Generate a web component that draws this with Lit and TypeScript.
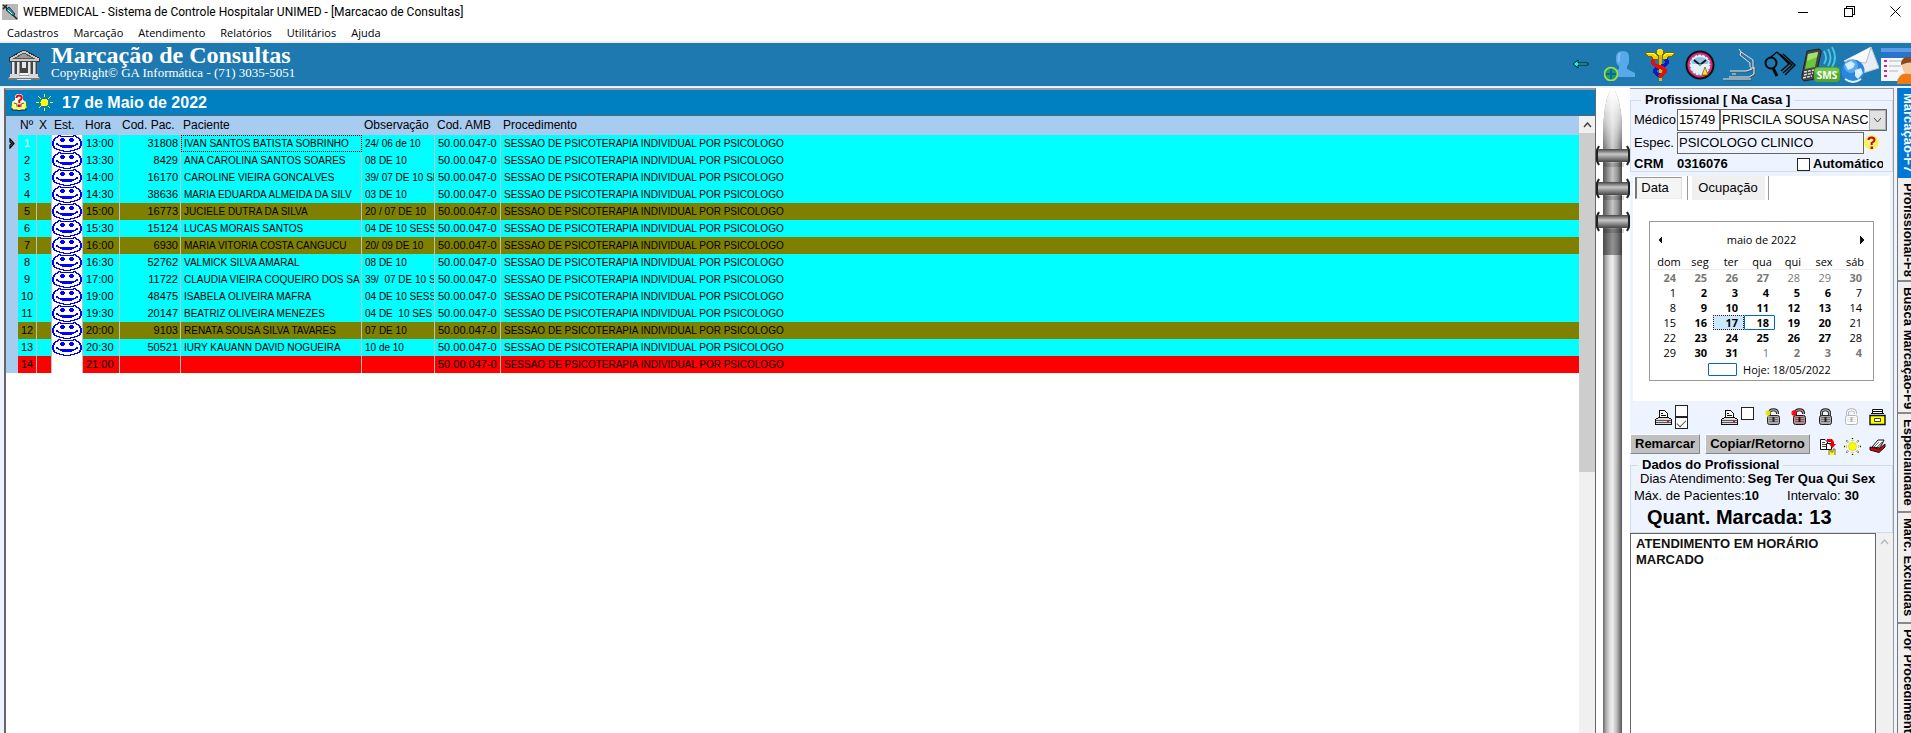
import { LitElement, html, css, svg } from "lit";
import { customElement, state } from "lit/decorators.js";
import { classMap } from "lit/directives/class-map.js";

type Tone = "free" | "seen" | "open";
interface Slot {
  hour: string;
  code: string;
  patient: string;
  note: string;
  tone: Tone;
}

const slot = (hour: string, code: string, patient: string, note: string, tone: Tone = "free"): Slot => ({
  hour, code, patient, note, tone,
});

const SLOTS: Slot[] = [
  slot("13:00", "31808", "IVAN SANTOS BATISTA SOBRINHO", "24/ 06 de 10"),
  slot("13:30", "8429", "ANA CAROLINA SANTOS SOARES", "08 DE 10"),
  slot("14:00", "16170", "CAROLINE VIEIRA GONCALVES", "39/ 07 DE 10 SE"),
  slot("14:30", "38636", "MARIA EDUARDA ALMEIDA DA SILV", "03 DE 10"),
  slot("15:00", "16773", "JUCIELE DUTRA DA SILVA", "20 / 07 DE 10", "seen"),
  slot("15:30", "15124", "LUCAS MORAIS SANTOS", "04 DE 10 SESS"),
  slot("16:00", "6930", "MARIA VITORIA COSTA CANGUCU", "20/ 09 DE 10", "seen"),
  slot("16:30", "52762", "VALMICK SILVA AMARAL", "08 DE 10"),
  slot("17:00", "11722", "CLAUDIA VIEIRA COQUEIRO DOS SA", "39/  07 DE 10 S"),
  slot("19:00", "48475", "ISABELA OLIVEIRA MAFRA", "04 DE 10 SESS"),
  slot("19:30", "20147", "BEATRIZ OLIVEIRA MENEZES", "04 DE  10 SES"),
  slot("20:00", "9103", "RENATA SOUSA SILVA TAVARES", "07 DE 10", "seen"),
  slot("20:30", "50521", "IURY KAUANN DAVID NOGUEIRA", "10 de 10"),
  slot("21:00", "", "", "", "open"),
];

const COLUMNS = [
  ["c-mark", ""], ["c-num", "Nº"], ["c-x", "X"], ["c-est", "Est."], ["c-hour", "Hora"], ["c-code", "Cod. Pac."],
  ["c-pat", "Paciente"], ["c-obs", "Observação"], ["c-amb", "Cod. AMB"], ["c-proc", "Procedimento"],
];

const WEEKDAYS = ["dom", "seg", "ter", "qua", "qui", "sex", "sáb"];
// b = bold (has bookings), g = outside the month
const DAYS: string[][] = [
  ["24bg", "25bg", "26bg", "27bg", "28g", "29g", "30bg"],
  ["1", "2b", "3b", "4b", "5b", "6b", "7"],
  ["8", "9b", "10b", "11b", "12b", "13b", "14"],
  ["15", "16b", "17b", "18b", "19b", "20b", "21"],
  ["22", "23b", "24b", "25b", "26b", "27b", "28"],
  ["29", "30b", "31b", "1g", "2bg", "3bg", "4bg"],
];

const SIDE_TABS = [
  ["Marcação-F7", "t1"], ["Profissional-F8", "t2"], ["Busca Marcação-F9", "t3"],
  ["Especialidade", "t4"], ["Marc. Excluidas", "t5"], ["Por Procedimento", "t6"],
];

const icon = (w: number, h: number, body: unknown, crisp = true) => html`<svg
  width=${w} height=${h} viewBox="0 0 ${w} ${h}" aria-hidden="true"
  shape-rendering=${crisp ? "crispEdges" : "auto"}>${body}</svg>`;

const smiley = icon(30, 17, svg`
  <rect width="30" height="17" fill="#fff"/>
  <path d="M6 0H9V1H6ZM21 0H24V1H21ZM8 1H22V2H8ZM5 1H7V2H5ZM23 1H25V2H23ZM3 2H6V3H3ZM24 2H27V3H24ZM2 3H4V4H2ZM26 3H28V4H26ZM1 4H3V6H1ZM27 4H29V6H27ZM0 6H2V11H0ZM28 6H30V11H28ZM1 11H3V13H1ZM27 11H29V13H27ZM2 13H5V14H2ZM25 13H28V14H25ZM4 14H8V15H4ZM22 14H26V15H22ZM7 15H12V16H7ZM18 15H23V16H18ZM11 16H19V17H11Z" fill="#00f"/>
  <path d="M9 3H12V4H13V6H12V7H9V6H8V4H9ZM18 3H21V4H22V6H21V7H18V6H17V4H18Z" fill="#00f"/>
  <path d="M4 8H6V9H7V10H23V9H24V8H26V10H24V11H22V12H20V13H10V12H8V11H6V10H4Z" fill="#00f"/>`);

const sun = icon(17, 17, svg`
  <path d="M8.500 0V17M0 8.500H17M2.500 2.500L14.500 14.500M14.500 2.500L2.500 14.500" stroke="#ff0" stroke-width="1.200"/>
  <circle cx="8.500" cy="8.500" r="5.500" fill="#0080c0"/>
  <circle cx="8.500" cy="8.500" r="4" fill="#ff0"/>`);

const sunDark = icon(17, 17, svg`
  <path d="M8.500 0V17M0 8.500H17M2.500 2.500L14.500 14.500M14.500 2.500L2.500 14.500" stroke="#222" stroke-width="1.400" stroke-dasharray="1 1"/>
  <path d="M8.500 1V16M1 8.500H16M3 3L14 14M14 3L3 14" stroke="#ee0" stroke-width="1"/>
  <circle cx="8.500" cy="8.500" r="5.500" fill="#eef4ff"/>
  <circle cx="8.500" cy="8.500" r="4" fill="#ff0" stroke="#aa0" stroke-width=".4"/>`, false);

const bookHelp = icon(16, 17, svg`
  <path d="M4 2L6 0H10L12 2V6L15 8V15L14 16H2L1 15V8L4 6Z" fill="#fff"/>
  <path d="M2 8L1 14H6L8 15L10 14H15L14 8" fill="#fff8b0" stroke="#ff0" stroke-width="1.200"/>
  <path d="M1 14V16H6L8 17L10 16H15V14" fill="none" stroke="#222"/>
  <path d="M3 9L6 10V13M13 9L10 10V13" fill="none" stroke="#333" stroke-width=".8"/>
  <path d="M5.500 4Q5.500 1.500 8 1.500Q10.800 1.500 10.800 4Q10.800 5.500 8.300 6.500V9" fill="none" stroke="#e00" stroke-width="2"/>
  <path d="M7 10.500H9.500V13H7Z" fill="#e00"/>`, false);

const bank = icon(32, 32, svg`
  <path d="M16 1L31 9V12H1V9Z" fill="#c9c9c9" stroke="#333" stroke-width="1"/>
  <path d="M16 4L25 9H7Z" fill="#999" stroke="#555" stroke-width="1"/>
  <path d="M3 12H29V26H3Z" fill="#444"/>
  <path d="M4 13H7V26H4ZM9 13H12V26H9ZM14 13H18V19H14ZM20 13H23V26H20ZM25 13H28V26H25Z" fill="#e6e6e6"/>
  <path d="M6 13V26M11 13V26M22 13V26M27 13V26" stroke="#999" stroke-width="1"/>
  <path d="M2 25H12V28H2ZM20 25H30V28H20Z" fill="#d8d8d8"/>
  <path d="M12 24H20V28H23V31H9V28H12Z" fill="#f2f2f2"/>
  <path d="M11 26H21M10 28H22" stroke="#999"/>
  <path d="M0 28H32V31H0Z" fill="#777"/><path d="M1 28H31M9 30H23" stroke="#ddd"/>`);

const syringe = icon(16, 16, svg`
  <rect width="16" height="16" fill="#b8b8b8"/>
  <path d="M1 1L5 4M1 5L5 1M4 4L11 11M11 11L15 15" stroke="#222" stroke-width="1.500"/>
  <path d="M4 6L7 3L13 10L11 12Z" fill="#1b8fa0" stroke="#123" stroke-width=".8"/>
  <path d="M6 6L10 10" stroke="#fff"/>`, false);

const TOOLS: [string, unknown][] = [
  ["Voltar", icon(17, 11, svg`<path d="M1 5L6 1V4H16V6H6V9Z" fill="#0ff" stroke="#111" stroke-width="1"/>`, false)],
  ["Novo paciente", icon(32, 32, svg`
    <path d="M12 8Q12 2 19 2Q25 2 25 8V13Q25 15 23 17V20L31 24V28H8V23L15 20V17Q12 15 12 11Z" fill="#57a9ea"/>
    <path d="M16 4Q14 8 15 13" stroke="#7cc0f4" stroke-width="2" fill="none"/>
    <circle cx="7" cy="25" r="6.500" fill="#15a06a" stroke="#a8e23a" stroke-width="1.600"/>
    <path d="M7 20V30M2 25H12" stroke="#1560a8" stroke-width="2"/>`, false)],
  ["Convênios", icon(32, 32, svg`
    <path d="M0 3H7Q12 3 14 7H18Q20 3 25 3H32L28 7H25L23 10H18V7H14V10H9L7 7H4Z" fill="#e8d400" stroke="#776600" stroke-width="1"/>
    <path d="M3 4H9L12 7M29 4H23L20 7" stroke="#ff6" fill="none"/>
    <path d="M16 4V32" stroke="#d9b800" stroke-width="3"/>
    <circle cx="16" cy="3" r="3" fill="#ffe000"/>
    <path d="M22 10Q25 15 19 17L13 19Q9 22 13 25L18 28" fill="none" stroke="#1018c0" stroke-width="4"/>
    <path d="M10 10Q7 15 13 17L19 19Q23 22 19 25L15 28" fill="none" stroke="#e01010" stroke-width="4"/>`)],
  ["Agenda", icon(30, 30, svg`
    <circle cx="15" cy="15" r="13" fill="#fff" stroke="#111" stroke-width="3"/>
    <circle cx="15" cy="15" r="11.500" fill="#dff0fb" stroke="#e0287a" stroke-width="2"/>
    <path d="M6 12Q15 2 24 12L22 14H8Z" fill="#8cc4e8"/>
    <circle cx="15" cy="15" r="10" fill="none" stroke="#1b3e80" stroke-width="1" stroke-dasharray="1 3"/>
    <path d="M9 10L15 15L21 10" fill="none" stroke="#111" stroke-width="1.800"/>
    <path d="M7 15H23M9 18H14M11 21H15" stroke="#e8f6ff"/>
    <path d="M17 25L20 17L23 25Z" fill="#ffe340" stroke="#776000" stroke-width=".8"/>`, false)],
  ["Exames", icon(34, 34, svg`
    <path d="M17 2L19 5L31 13V20L32 22V27L27 30H7M19 5L18 8L28 16V20M28 21H33M8 24H24L30 22M10 27H14M1 32H29" fill="none" stroke="#555" stroke-width="1"/>
    <path d="M16 1L18 4L30 12V19L31 21V26L26 29H6M18 4L17 7L27 15V19M27 20H32M7 23H23L29 21M9 26H13M0 31H28" fill="none" stroke="#e8e8e8" stroke-width="1"/>`, false)],
  ["Localizar", icon(32, 28, svg`
    <path d="M13 1L25 13L17 20M13 1L7 6M16 3L28 14L19 22M19 3L31 14L21 24" fill="none" stroke="#080808" stroke-width="1.500"/>
    <circle cx="7" cy="12" r="5.500" fill="#1e79b0" stroke="#080808" stroke-width="2"/>
    <path d="M9 17L13 25" stroke="#080808" stroke-width="3"/>`, false)],
  ["SMS", icon(40, 38, svg`
    <path d="M7 5L19 3Q22 4 21 7L15 33L4 35Q1 33 2 29Z" fill="#444" stroke="#222"/>
    <path d="M8 8L18 6L15 21L5 23Z" fill="#6cc53a"/><path d="M8 8L18 6L17 11L7 15Z" fill="#a8e070"/>
    <path d="M4 26L14 24M4 29L13 27M3 32L12 30" stroke="#ddd" stroke-width="1.500" stroke-dasharray="3 1"/>
    <path d="M24 5Q28 12 24 18M28 3Q33 12 28 20M32 1Q38 12 32 21" fill="none" stroke="#46c4e0" stroke-width="2"/>
    <rect x="14" y="21" width="26" height="15" rx="4" fill="#4fa82b"/><rect x="15" y="22" width="24" height="6" rx="3" fill="#74c74c"/>
    <text x="27" y="33" text-anchor="middle" font-family="Open Sans, sans-serif" font-size="10" font-weight="700" fill="#fff">SMS</text>`, false)],
  ["E-mail", icon(38, 38, svg`
    <path d="M3 15L30 1L38 22L22 27Z" fill="#e9edf4" stroke="#b9c3d2"/>
    <path d="M3 15L25 17L30 1" fill="#fafbfd" stroke="#b4bfcd"/>
    <circle cx="12" cy="25" r="11.500" fill="#2a86dd"/><circle cx="10" cy="20" r="7" fill="#6db8f5" opacity=".7"/>
    <path d="M4 18L10 15L14 18L12 22L7 24ZM14 24L20 22L22 27L17 33L14 30Z" fill="#d8efff"/>
    <path d="M4 33Q12 39 20 33" stroke="#e4f3ff" stroke-width="2" fill="none"/>`, false)],
  ["Recepção", icon(38, 38, svg`
    <rect x="0" y="2" width="38" height="33" fill="#f3f6fb"/><rect x="0" y="2" width="38" height="10" fill="#2b73c8"/>
    <path d="M0 2H38V6H0Z" fill="#5b9de4"/>
    <path d="M3 15H6M3 20H6M3 25H6M3 30H6" stroke="#d8208c" stroke-width="2"/>
    <path d="M8 15H22M8 20H20M8 25H17" stroke="#ccc" stroke-width="1.500"/>
    <path d="M16 38Q16 28 26 27Q36 28 37 38Z" fill="#f07a14"/>
    <ellipse cx="27" cy="20" rx="6" ry="8" fill="#f4c9a0"/><path d="M20 19Q20 11 27 11Q34 11 34 19Q30 14 20 19Z" fill="#8a4a1c"/>`, false)],
];

const printer = icon(17, 17, svg`
  <path d="M4.500 9V1.500H9.500L12.500 4.500V9" fill="#fff" stroke="#111"/><path d="M6 4.500H8M6 6.500H11" stroke="#111"/>
  <path d="M.5 10.500L3.500 8.500H13.500L16.500 10.500V15.500H.5Z" fill="#ddd" stroke="#111"/><path d="M1 11.500H16M1 13.500H16" stroke="#555"/>
  <path d="M12 12H14V13H12Z" fill="#e00"/>`);

const lock = (body: string, line: string, open: boolean, spark = "") => {
  const shackle = open ? "M4.500 7V5Q4.500 1.800 8.500 1.800Q12.500 1.800 12.500 5V6" : "M4.500 9V5Q4.500 1.800 8.500 1.800Q12.500 1.800 12.500 5V9";
  return icon(17, 18, svg`
  <path d=${shackle} fill="none" stroke=${line} stroke-width="3"/>
  <path d=${shackle} fill="none" stroke=${body} stroke-width="1.200"/>
  <rect x="2.500" y="7.500" width="12" height="9" rx="2" fill=${body} stroke=${line}/>
  <path d="M4 9.500H13M4 11.500H13M4 13.500H13" stroke=${line} stroke-width=".4"/>
  <path d="M7.500 9H9.500V14H7.500Z" fill=${line}/>
  ${spark ? svg`<path d="M0 5H6M3 2V9M1 3L5 7M5 3L1 7" stroke=${spark} stroke-width="1.200"/>` : ""}`, false);
};

const drawer = icon(17, 18, svg`
  <path d="M3.500 6V1.500H13.500V6" fill="#fff" stroke="#111"/><path d="M3 3.500H14M2 5.500H15" stroke="#111"/>
  <path d="M1 7.500H16V16.500H1Z" fill="#ff0" stroke="#111" stroke-width="1.400"/>
  <path d="M5.500 10.500H11.500V13.500H5.500Z" fill="#fff" stroke="#111" stroke-width=".8"/>`, false);

const copyDoc = icon(17, 17, svg`
  <path d="M1.500 1.500H6L8.500 4V11.500H1.500Z" fill="#fff" stroke="#111"/><path d="M3 4.500H6M3 6.500H7M3 8.500H7" stroke="#111" stroke-width=".8"/>
  <path d="M7.500 5.500H12.500V11.500H7.500Z" fill="#fff" stroke="#111"/>
  <path d="M8 1H13L15 4V6H17L13.500 10L10 6H12V4H8Z" fill="#e00"/>
  <path d="M10 17V12H12V14H14V11H16V17" fill="#ff0" stroke="#553" stroke-width=".8"/>`, false);

const tray = icon(17, 15, svg`
  <path d="M3 8L9 1H15L11 9Z" fill="#fff" stroke="#111"/><path d="M5 8L10 3M7 9L13 3M9 9L14 3" stroke="#111" stroke-width=".6"/>
  <path d="M1 8L10 10L16 5V8L10 13.500L1 11Z" fill="#d00" stroke="#111"/>`, false);

const question = icon(15, 15, svg`
  <circle cx="7.500" cy="7.500" r="7.500" fill="#fff79a"/>
  <circle cx="7.500" cy="7.500" r="5.500" fill="none" stroke="#ffe600" stroke-width="3" stroke-dasharray="1 1"/>
  <path d="M4.500 5Q4.500 2.500 7.500 2.500Q10.500 2.500 10.500 5Q10.500 6.500 7.700 7.800V10" fill="none" stroke="#d00000" stroke-width="2"/><path d="M6.500 11.500H9V14H6.500Z" fill="#d00000"/>`, false);

const ring = (y: number) => svg`
  <rect x="8" y=${y + 14} width="20" height="4" fill="#000" opacity=".15"/>
  <path d="M3 ${y - 3}L1 ${y + 1}V${y + 12}L3 ${y + 16}M31 ${y - 3}L33 ${y + 1}V${y + 12}L31 ${y + 16}" stroke="#222" stroke-width="2" fill="none"/>
  <rect x="2" y=${y} width="30" height="13" fill="url(#band)"/>`;

const spineTop = html`<svg class="spine-top" width="34" height="167" viewBox="0 0 34 167" aria-hidden="true">
  <defs>
    <linearGradient id="rod"><stop offset="0" stop-color="#555"/><stop offset=".3" stop-color="#999"/><stop offset=".5" stop-color="#c4c4c4"/><stop offset=".75" stop-color="#999"/><stop offset="1" stop-color="#444"/></linearGradient>
    <linearGradient id="tip" x2="0" y2="1"><stop offset="0" stop-color="#fff"/><stop offset=".5" stop-color="#fff" stop-opacity=".6"/><stop offset="1" stop-color="#fff" stop-opacity="0"/></linearGradient>
    <linearGradient id="band" x2="0" y2="1"><stop offset="0" stop-color="#444"/><stop offset=".4" stop-color="#c8c8c8"/><stop offset="1" stop-color="#444"/></linearGradient>
  </defs>
  <path d="M14 3H19L22 10L25 24L26 38V167H7V38L9 20L11 10Z" fill="url(#rod)"/>
  <path d="M14 3H19L22 10L25 24L26 38V70H7V38L9 20L11 10Z" fill="url(#tip)"/>
  <rect x="7" y="140" width="19" height="27" fill="#333" opacity=".35"/>
  ${ring(61)}${ring(94)}${ring(127)}
</svg>`;

@customElement("app-root")
export class AppRoot extends LitElement {
  @state() private current = 0;

  static styles = css`
    :host { display: block; height: 100vh; overflow: hidden; font: 12px/16px "Liberation Sans", Arial, sans-serif; color: #000; background: #fff; }
    * { box-sizing: border-box; }
    svg { display: block; flex: none; }
    button { font: inherit; color: inherit; border: 0; padding: 0; margin: 0; background: none; }
    .app { display: flex; flex-direction: column; height: 100%; }

    .titlebar { flex: none; display: flex; align-items: center; height: 23px; padding-left: 2px; gap: 5px; font: 12px/16px Roboto, "Segoe UI", sans-serif; }
    .titlebar h1 { flex: 1; margin: 0; font: inherit; }
    .winbtns { display: flex; margin-right: -7px; }
    .winbtns button { width: 46px; height: 20px; display: grid; place-items: center; }
    .menu { flex: none; display: flex; gap: 15px; height: 18px; padding-left: 7px; font: 11px/20px "Open Sans", "Segoe UI", sans-serif; }

    .banner { flex: none; display: flex; align-items: center; height: 46px; border-top: 2px solid #f0f0f0; border-bottom: 1px solid #e8f0f8; background: #1e79b0; color: #fff; padding-left: 8px; gap: 11px; overflow: hidden; font-family: "Liberation Serif", "Times New Roman", serif; }
    .banner h2 { margin: 0; font-size: 24px; line-height: 22px; }
    .banner p { margin: 0; font-size: 13px; line-height: 14px; }
    .names { flex: 1; padding-bottom: 5px; }
    .tools { display: flex; margin-right: -9px; }
    .tools button { width: 40px; height: 42px; display: grid; place-items: center; }

    .body { flex: 1; min-height: 0; display: grid; grid-template-columns: minmax(0, 1fr) 34px 264px 17px; padding: 1px 0 0 4px; background: #eef4ff; }
    .agenda { display: flex; flex-direction: column; min-height: 0; background: #fff; border: 1px solid #666; border-top: 2px solid #99a; border-left-width: 2px; border-bottom: 0; }
    .daybar { flex: none; display: flex; align-items: center; height: 26px; padding-left: 5px; gap: 9px; background: #0080c0; color: #fff; border-bottom: 1px solid #567; }
    .daybar h3 { margin: 0; font-size: 16px; line-height: 22px; }
    .gridwrap { flex: 1; min-height: 0; display: grid; grid-template-columns: minmax(0, 1fr) 16px; }
    .scroll { overflow: hidden; }

    table.slots { width: 100%; table-layout: fixed; border-collapse: separate; border-spacing: 0; }
    .slots th { height: 19px; padding: 0 0 0 2px; background: #a8cbf0; font-weight: 400; font-size: 12px; line-height: 19px; text-align: left; white-space: nowrap; }
    .slots td { height: 17px; padding: 0 2px 0 3px; line-height: 17px; font-size: 11px; white-space: pre; overflow: hidden; border-right: 1px solid #c0c0c0; }
    .c-mark { width: 12px; } .c-num { width: 19px; } .c-x { width: 15px; } .c-est { width: 31px; }
    .c-hour { width: 37px; } .c-code { width: 61px; } .c-pat { width: 181px; } .c-obs { width: 73px; } .c-amb { width: 66px; }
    .slots td.c-mark { background: #a8cbf0; padding: 0 3px; border: 0; }
    .slots td.c-num { text-align: center; padding: 0; }
    .slots td.c-code { text-align: right; }
    .slots td.c-est { padding: 0; background: #fff; }
    .slots td.c-pat, .slots td.c-obs, .slots td.c-proc { font-size: 10px; }
    .slots td.c-proc { border: 0; }
    .free td { background: #0ff; } .seen td { background: #808000; } .open td { background: #f00; }
    .current td.c-num { color: #fff; }
    .current td.c-pat { outline: 1px dotted #000; outline-offset: -1px; }

    .bar { background: #f0f0f0; display: flex; flex-direction: column; min-height: 0; }
    .bar .arrow { height: 17px; display: grid; place-items: center; }
    .thumb { height: 55%; background: #cdcdcd; }

    .spine { display: flex; flex-direction: column; background: #fff; }
    .rod { flex: 1; width: 19px; margin-left: 7px; background: linear-gradient(90deg, #666, #aaa 15%, #ddd 35%, #eee 50%, #bbb 72%, #555); }

    .side { display: flex; flex-direction: column; min-height: 0; border-right: 1px solid #999; border-top: 1px solid #999; }
    fieldset { margin: 0; min-width: 0; border: 1px solid #d4dbe8; padding: 0; }
    legend { margin-left: 7px; padding: 0 4px; font-weight: 700; font-size: 13px; line-height: 14px; }
    .prof { margin-top: 4px; display: grid; gap: 2px; padding: 2px 0 0 3px; font-size: 13px; height: 79px; }
    .prof .row { display: flex; align-items: center; height: 21px; }
    .prof label { width: 43px; white-space: nowrap; }
    .prof .crm { height: 18px; font-weight: 700; }
    .prof input[type="text"], .prof select { height: 22px; border: 1px solid #666; border-radius: 0; background: #fff; font: 13px/18px "Liberation Sans", Arial, sans-serif; color: #000; padding: 0 1px; margin: 0; }
    .prof .num { width: 43px; margin-right: 1px; }
    .prof .espec { width: 187px; margin-right: 5px; background: #eef4ff !important; }
    .pick { position: relative; width: 167px; }
    .prof select { width: 100%; appearance: none; padding-right: 18px; }
    .pick svg { position: absolute; right: 1px; top: 1px; pointer-events: none; }
    .auto { display: flex; align-items: center; gap: 3px; flex: none; margin-left: auto; margin-right: 9px; overflow: hidden; }
    .prof .auto { width: 86px; }
    input[type="checkbox"] { appearance: none; flex: none; width: 13px; height: 13px; margin: 0; border: 1px solid #222; background: #fff; }
    input.tick:checked::before { content: ""; display: block; width: 8px; height: 4px; margin: 2px 0 0 1px; border: solid #555; border-width: 0 0 1px 1px; transform: rotate(-45deg); }

    .datebox { flex: none; margin: 4px 3px 0; background: #fff; height: 225px; }
    .tabs { display: flex; height: 26px; font-size: 13px; }
    .tabs button { height: 22px; }
    .tabs .on { width: 47px; margin: 1px 0 0 2px; padding-right: 8px; background: #f5f5f5; border: 1px solid #999; border-left: 2px solid #777; border-right-color: #ddd; border-bottom-color: #eee; }
    .tabs .off { width: 82px; height: 24px; margin-left: 5px; background: #f0f0f0; border: solid #999; border-width: 0 1px; box-shadow: inset 4px 0 #fff, inset -3px 0 #fff; }
    .cal { width: 225px; height: 160px; margin: 19px 0 0 16px; border: 1px solid #999; font: 11px/15px "Open Sans", "Segoe UI", sans-serif; padding: 10px 5px 0 1px; }
    .calhead { display: flex; justify-content: space-between; align-items: center; height: 15px; padding: 0 3px 0 7px; margin-bottom: 7px; }
    .cal table { border-spacing: 0; width: 100%; table-layout: fixed; }
    .cal th { padding: 0 0 0 5px; height: 16px; line-height: 15px; font-weight: 400; border-bottom: 1px solid #eee; }
    .cal td { padding: 0 5px 0 0; height: 15px; line-height: 13px; text-align: right; border: 1px solid transparent; }
    .cal .b { font-weight: 700; } .cal .g { color: #777; }
    .cal .sel { background: #cce8ff; border: 1px dotted #222; }
    .cal .today { border: 1px solid #0066cc; border-radius: 1px; }
    .hoje { display: flex; justify-content: center; gap: 6px; align-items: center; height: 18px; padding-left: 20px; }
    .hoje i { width: 29px; height: 13px; border: 1px solid #0066cc; border-radius: 1px; }

    .acts { flex: none; display: flex; align-items: center; height: 32px; padding: 0 7px 0 25px; }
    .acts .pair { display: flex; align-items: center; gap: 3px; }
    .acts .stack { display: flex; flex-direction: column; }
    .acts .stack input { height: 12px; }
    .acts .pair.two { margin: 0 11px 0 33px; }
    .acts .pair.two input { margin-bottom: 8px; }
    .locks { flex: 1; display: flex; justify-content: space-between; }
    .cmds { flex: none; display: flex; align-items: center; height: 22px; gap: 5px; padding-right: 7px; }
    .cmds .cmd { height: 20px; background: #c0c0c0; border: 1px solid; border-color: #fff #888 #888 #fff; font-weight: 700; font-size: 13px; padding: 0 2px; white-space: nowrap; }
    .cmds .cmd:nth-child(1) { width: 70px; } .cmds .cmd:nth-child(2) { width: 105px; }
    .cmds .small { display: flex; flex: 1; justify-content: space-between; padding: 5px 0 0 4px; }

    .dados { flex: none; margin-top: 3px; height: 75px; font-size: 13px; }
    .dados p { margin: 0; display: flex; height: 17px; line-height: 14px; white-space: nowrap; }
    .dados b { font-weight: 700; }
    .dados .d1 { padding-left: 9px; gap: 2px; }
    .dados .d2 { padding-left: 3px; }
    .dados .d2 .gap { margin-left: 28px; margin-right: 4px; }
    .dados .quant { padding-left: 16px; font: 700 20px/22px "Liberation Sans", Arial, sans-serif; height: 24px; }
    .obs { flex: 1; min-height: 0; display: grid; grid-template-columns: minmax(0, 1fr) 17px; }
    textarea { resize: none; border: 1px solid #666; border-bottom: 0; border-radius: 0; margin: 0; padding: 2px 5px; font: 700 13px/16px "Liberation Sans", Arial, sans-serif; color: #111; background: #fff; overflow: hidden; width: 100%; height: 100%; }

    .sidetabs { display: flex; flex-direction: column; margin-left: 3px; border-left: 1px solid #777; background: #f0f0f0; overflow: hidden; }
    .sidetabs button { flex: none; writing-mode: vertical-rl; text-align: start; font: 700 13px/20px "Liberation Sans", Arial, sans-serif; width: 20px; padding-top: 5px; border-bottom: 2px solid #888; white-space: nowrap; overflow: hidden; }
    .sidetabs button.active { background: #0078d7; color: #fff; border-bottom: 0; }
    .t1 { height: 90px; } .t2 { height: 104px; } .t3 { height: 132px; } .t4 { height: 99px; } .t5 { height: 111px; } .t6 { height: 132px; }
  `;

  private arrow(color: string) {
    return icon(9, 6, svg`<path d="M1 5L4.500 1L8 5" fill="none" stroke=${color} stroke-width="1.500"/>`, false);
  }

  private renderRow(s: Slot, i: number) {
    return html`<tr class=${classMap({ [s.tone]: true, current: i === this.current })} @click=${() => (this.current = i)}>
      <td class="c-mark">${i === this.current
        ? icon(6, 11, svg`<path d="M1 1L5 5.500L1 10V7L3 5.500L1 4Z" fill="none" stroke="#000" stroke-width="1.200"/>`, false)
        : ""}</td>
      <td class="c-num">${i + 1}</td><td class="c-x"></td>
      <td class="c-est">${s.tone === "open" ? "" : smiley}</td>
      <td class="c-hour">${s.hour}</td><td class="c-code">${s.code}</td><td class="c-pat">${s.patient}</td>
      <td class="c-obs">${s.note}</td><td class="c-amb">50.00.047-0</td>
      <td class="c-proc">SESSAO DE PSICOTERAPIA INDIVIDUAL POR PSICOLOGO</td>
    </tr>`;
  }

  private renderDay(code: string, row: number) {
    const day = parseInt(code, 10);
    return html`<td class=${classMap({
      b: code.includes("b"), g: code.includes("g"), sel: row === 3 && day === 17, today: row === 3 && day === 18,
    })}>${day}</td>`;
  }

  render() {
    return html`<div class="app">
      <header class="titlebar">
        ${syringe}
        <h1>WEBMEDICAL - Sistema de Controle Hospitalar UNIMED - [Marcacao de Consultas]</h1>
        <div class="winbtns">
          <button aria-label="Minimizar">${icon(11, 11, svg`<path d="M0 6H10" stroke="#000"/>`)}</button>
          <button aria-label="Restaurar">${icon(11, 11, svg`<path d="M.5 2.500H8.500V10.500H.5ZM2.500 2.500V.5H10.500V8.500H8.500" fill="none" stroke="#000"/>`)}</button>
          <button aria-label="Fechar">${icon(11, 11, svg`<path d="M.5 .5L10.500 10.500M10.500 .5L.5 10.500" stroke="#000"/>`, false)}</button>
        </div>
      </header>
      <nav class="menu">
        ${["Cadastros", "Marcação", "Atendimento", "Relatórios", "Utilitários", "Ajuda"].map((m) => html`<button>${m}</button>`)}
      </nav>
      <section class="banner">
        ${bank}
        <div class="names"><h2>Marcação de Consultas</h2><p>CopyRight© GA Informática - (71) 3035-5051</p></div>
        <div class="tools">${TOOLS.map(([name, art]) => html`<button aria-label=${name}>${art}</button>`)}</div>
      </section>
      <main class="body">
        <section class="agenda">
          <div class="daybar">${bookHelp}${sun}<h3>17 de Maio de 2022</h3></div>
          <div class="gridwrap">
            <div class="scroll">
              <table class="slots">
                <thead><tr>${COLUMNS.map(([c, t]) => html`<th class=${c}>${t}</th>`)}</tr></thead>
                <tbody>${SLOTS.map((s, i) => this.renderRow(s, i))}</tbody>
              </table>
            </div>
            <div class="bar"><span class="arrow">${this.arrow("#444")}</span><div class="thumb"></div></div>
          </div>
        </section>
        <div class="spine">${spineTop}<div class="rod"></div></div>
        <aside class="side">
          <fieldset class="prof">
            <legend>Profissional [ Na Casa ]</legend>
            <div class="row"><label for="med">Médico</label>
              <input id="med" class="num" type="text" value="15749" />
              <span class="pick"><select aria-label="Nome do médico"><option>PRISCILA SOUSA NASCIMENTO</option></select>
                ${icon(17, 20, svg`<rect width="17" height="20" fill="#adadad"/><rect x="1" y="1" width="15" height="18" fill="#e1e1e1"/><path d="M5 8L8.500 12L12 8" fill="none" stroke="#444"/>`, false)}</span>
            </div>
            <div class="row"><label for="esp">Espec.</label>
              <input id="esp" class="espec" type="text" value="PSICOLOGO CLINICO" />${question}</div>
            <div class="row crm"><label>CRM</label><span>0316076</span>
              <label class="auto"><input type="checkbox" />Automático</label></div>
          </fieldset>
          <div class="datebox">
            <div class="tabs"><button class="on">Data</button><button class="off">Ocupação</button></div>
            <div class="cal">
              <div class="calhead">
                <button aria-label="Mês anterior">${icon(5, 8, svg`<path d="M4 0V8L0 4Z" fill="#111"/>`)}</button>
                <span>maio de 2022</span>
                <button aria-label="Próximo mês">${icon(5, 8, svg`<path d="M0 0V8L4 4Z" fill="#111"/>`)}</button>
              </div>
              <table>
                <thead><tr>${WEEKDAYS.map((d) => html`<th>${d}</th>`)}</tr></thead>
                <tbody>${DAYS.map((w, r) => html`<tr>${w.map((d) => this.renderDay(d, r))}</tr>`)}</tbody>
              </table>
              <div class="hoje"><i></i><span>Hoje: 18/05/2022</span></div>
            </div>
          </div>
          <div class="acts">
            <div class="pair">${printer}<span class="stack">
              <input type="checkbox" aria-label="Imprimir tudo" /><input class="tick" type="checkbox" aria-label="Imprimir marcados" checked /></span></div>
            <div class="pair two">${printer}<input type="checkbox" aria-label="Imprimir ficha" /></div>
            <div class="locks">
              <button aria-label="Abrir horário">${lock("#aaa", "#222", true, "#e6e600")}</button>
              <button aria-label="Bloquear dia">${lock("#b09090", "#2a1111", true, "#f00")}</button>
              <button aria-label="Bloquear">${lock("#aaa", "#222", false)}</button>
              <button aria-label="Desbloquear">${lock("#fff", "#b4b4b4", true)}</button>
              <button aria-label="Arquivo">${drawer}</button>
            </div>
          </div>
          <div class="cmds">
            <button class="cmd">Remarcar</button><button class="cmd">Copiar/Retorno</button>
            <span class="small"><button aria-label="Copiar">${copyDoc}</button><button aria-label="Turno">${sunDark}</button><button aria-label="Fichas">${tray}</button></span>
          </div>
          <fieldset class="dados">
            <legend>Dados do Profissional</legend>
            <p class="d1"><span>Dias Atendimento:</span><b>Seg Ter Qua Qui Sex</b></p>
            <p class="d2"><span>Máx. de Pacientes:</span><b>10</b><span class="gap">Intervalo:</span><b>30</b></p>
            <p class="quant">Quant. Marcada: 13</p>
          </fieldset>
          <div class="obs">
            <textarea aria-label="Observações do profissional" .value=${"ATENDIMENTO EM HORÁRIO\nMARCADO"}></textarea>
            <div class="bar"><span class="arrow">${this.arrow("#bbb")}</span></div>
          </div>
        </aside>
        <nav class="sidetabs">
          ${SIDE_TABS.map(([t, c], i) => html`<button class="${c} ${i === 0 ? "active" : ""}">${t}</button>`)}
        </nav>
      </main>
    </div>`;
  }
}
